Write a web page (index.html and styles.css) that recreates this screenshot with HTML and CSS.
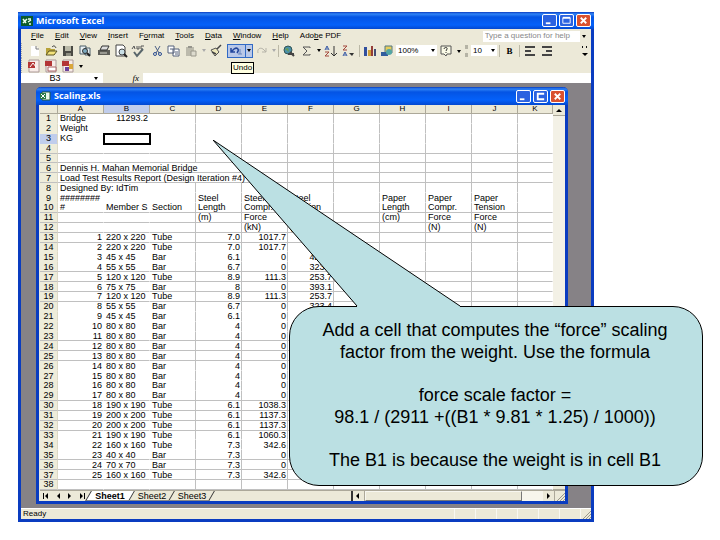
FILE: index.html
```html
<!DOCTYPE html>
<html lang="en">
<head>
<meta charset="utf-8">
<title>Microsoft Excel</title>
<link rel="stylesheet" href="styles.css">
</head>
<body>
<main class="slide">
  <section class="window app">
    <header class="titlebar">
      <svg class="logo" viewBox="0 0 12 10"><path fill="#0b5a2c" d="M0 0h12v10H0z"/><path stroke="#e8fff0" stroke-width="1.5" fill="none" d="M2 3l3 4M6 3L2 7M7 3h3M7 6l3-2M8 8h2"/></svg>
      <h1>Microsoft Excel</h1>
      <div class="controls">
        <button class="ctl" aria-label="Minimize"><svg viewBox="0 0 14 12"><path d="M3 8h5v2H3z" fill="#fff"/></svg></button>
        <button class="ctl" aria-label="Restore"><svg viewBox="0 0 14 12"><path d="M3 3h8v6H3z" fill="none" stroke="#fff"/><path d="M3 3h8" stroke="#fff" stroke-width="2"/></svg></button>
        <button class="ctl close" aria-label="Close"><svg viewBox="0 0 14 12"><path d="M4 3l6 6M10 3L4 9" stroke="#fff" stroke-width="2"/></svg></button>
      </div>
    </header>

    <nav class="menubar">
      <a href="#"><u>F</u>ile</a><a href="#"><u>E</u>dit</a><a href="#"><u>V</u>iew</a><a href="#"><u>I</u>nsert</a><a href="#">F<u>o</u>rmat</a><a href="#"><u>T</u>ools</a><a href="#"><u>D</u>ata</a><a href="#"><u>W</u>indow</a><a href="#"><u>H</u>elp</a><a href="#">Ado<u>b</u>e PDF</a>
      <div class="ask"><input type="text" aria-label="Question" placeholder="Type a question for help"><button class="arrow" aria-label="Recent questions"></button></div>
    </nav>

    <div class="toolbar">
      <div class="group">
        <button class="tool" aria-label="New"><svg viewBox="0 0 16 14"><path d="M5 2h5l3 3v7H5z" fill="#fff"/><path d="M10 2v3h3" fill="none" stroke="#777"/></svg></button>
        <button class="tool" aria-label="Open"><svg viewBox="0 0 16 14"><path d="M3 4h4l1 1h4v6H3z" fill="#b7a238"/><path d="M3 11l3-4h8l-3 4z" fill="#f3e27a" stroke="#5b5424"/><path d="M9 3c2-2 3-1 4 1" fill="none" stroke="#333"/></svg></button>
        <button class="tool" aria-label="Save"><svg viewBox="0 0 16 14"><path d="M3 2h10v10H3z" fill="#4a4a44"/><path d="M5 2h6v5H5z" fill="#b9b9a8"/><path d="M6 9h5v3H6z" fill="#8d8d80"/></svg></button>
        <button class="tool" aria-label="Search"><svg viewBox="0 0 16 14"><path d="M3 2h6v8H3zM8 4h5v7H8z" fill="#e8f0f4" stroke="#4d5e68"/><circle cx="8" cy="7" r="2.500" fill="#7ca9bf" stroke="#333"/><path d="M10 9l3 3" stroke="#222" stroke-width="2"/></svg></button>
      </div>
      <div class="group">
        <button class="tool" aria-label="Print"><svg viewBox="0 0 16 14"><path d="M2 6h12v5H2z" fill="#5d5d57"/><path d="M6 2h7l-2 4H4z" fill="#ddd" stroke="#333"/><path d="M4 9h7" stroke="#d6d6cc"/></svg></button>
        <button class="tool" aria-label="Print preview"><svg viewBox="0 0 16 14"><path d="M3 1h7l2 2v9H3z" fill="#fff" stroke="#444"/><circle cx="9" cy="8" r="3" fill="#c9dfe6" stroke="#444"/><path d="M11 10l3 3" stroke="#222" stroke-width="2"/></svg></button>
        <button class="tool" aria-label="Spelling"><svg viewBox="0 0 16 14"><path d="M2 5l2-3 1 3M7 2v3h2V2M14 2h-3v3h2" fill="none" stroke="#555"/><path d="M4 8l3 4 6-7" fill="none" stroke="#59666b" stroke-width="2"/></svg></button>
      </div>
      <div class="group">
        <button class="tool" aria-label="Cut"><svg viewBox="0 0 16 14"><path d="M6 2l4 7M11 2L7 9" stroke="#4b5f85"/><circle cx="6" cy="10" r="1.500" fill="none" stroke="#2b4d92"/><circle cx="11" cy="10" r="1.500" fill="none" stroke="#2b4d92"/></svg></button>
        <button class="tool" aria-label="Copy"><svg viewBox="0 0 16 14"><path d="M2 2h6v7H2zM7 5h6v7H7z" fill="#fff" stroke="#55607a"/><path d="M4 5h3M9 8h3M9 10h3" stroke="#55607a"/></svg></button>
        <button class="tool" aria-label="Paste"><svg viewBox="0 0 16 14"><path d="M3 3h8v9H3z" fill="#bcbaac"/><path d="M5 2h4v2H5z" fill="#96958c"/><path d="M8 7h5v5H8z" fill="#dddbce" stroke="#99978b"/></svg></button>
        <button class="arrow dim" aria-label="Paste options"></button>
        <button class="tool" aria-label="Format painter"><svg viewBox="0 0 16 14"><path d="M3 6l5-2 3 4-4 4z" fill="#eee9bd" stroke="#555"/><path d="M9 5l4-4M4 8l4 2" stroke="#444" stroke-width="1.5"/></svg></button>
      </div>
      <div class="undo">
        <button class="tool" aria-label="Undo"><svg viewBox="0 0 16 14"><path d="M3 4v4h4M3 8l3-3c3-2 6 0 3 4" fill="none" stroke="#23479d" stroke-width="1.5"/><path d="M12 5v5M10 10h4" stroke="#6684bd"/></svg></button>
        <button class="arrow" aria-label="Undo history"></button>
        <span class="tooltip" role="tooltip">Undo</span>
      </div>
      <div class="group tight">
        <button class="tool" aria-label="Redo"><svg viewBox="0 0 16 14"><path d="M13 4v4H9M13 8l-3-3C7 3 4 5 5 9" fill="none" stroke="#b5b3a8"/></svg></button>
        <button class="arrow dim" aria-label="Redo history"></button>
      </div>
      <div class="group ruled">
        <button class="tool" aria-label="Hyperlink"><svg viewBox="0 0 16 14"><circle cx="7" cy="6" r="4" fill="#4a90a9" stroke="#355"/><path d="M4 5l3-1 1 4" fill="#6a9b52"/><path d="M7 10h6M9 8l4 4" stroke="#444" stroke-width="2"/></svg></button>
        <button class="tool" aria-label="AutoSum"><svg viewBox="0 0 16 14"><path d="M12 4V3H5l4 4-4 4h7v-1" fill="none" stroke="#555"/></svg></button>
        <button class="arrow" aria-label="AutoSum options"></button>
        <button class="tool" aria-label="Sort ascending"><svg viewBox="0 0 16 14"><path d="M2 6l2-4 2 4M3 5h2" fill="none" stroke="#3356a5"/><path d="M2 8h4l-4 4h4" fill="none" stroke="#a3483c"/><path d="M11 2v9M8 9l3 3 3-3" fill="none" stroke="#333"/></svg></button>
        <button class="tool" aria-label="Sort descending"><svg viewBox="0 0 16 14"><path d="M3 2h4L3 6h4" fill="none" stroke="#a3483c"/><path d="M3 12l2-4 2 4M4 11h2" fill="none" stroke="#3356a5"/><path d="M9 9h5l-2 3z" fill="#333"/></svg></button>
      </div>
      <div class="group ruled">
        <button class="tool" aria-label="Chart wizard"><svg viewBox="0 0 16 14"><path d="M2 3h3v9H2z" fill="#314f9d"/><path d="M6 6h3v6H6z" fill="#cf9f39"/><path d="M9 2h2v10H9z" fill="#953d38"/><path d="M12 5h2v7h-2z" fill="#454d74"/></svg></button>
        <button class="tool" aria-label="Drawing"><svg viewBox="0 0 16 14"><path d="M6 2h7v7H6z" fill="#e5cd5d" stroke="#527783"/><path d="M2 8h7v4H2z" fill="#315d9e"/><circle cx="10" cy="8" r="3" fill="#52a6a5"/></svg></button>
        <div class="combo zoom"><input type="text" aria-label="Zoom" value="100%"><button class="arrow" aria-label="Zoom levels"></button></div>
        <button class="tool" aria-label="Help"><svg viewBox="0 0 16 14"><path d="M3 2h10v8H9l-1 2-2-2H3z" fill="#fafae6" stroke="#555"/><path d="M6 5c0-2 4-2 3 0L8 7M8 8v1" fill="none" stroke="#333"/></svg></button>
        <button class="arrow low" aria-label="Toolbar options"></button>
      </div>
      <div class="group grip">
        <div class="combo size"><input type="text" aria-label="Font size" value="10"><button class="arrow" aria-label="Font sizes"></button></div>
      </div>
      <div class="group ruled"><button class="tool bold" aria-label="Bold">B</button></div>
      <div class="group ruled">
        <button class="tool" aria-label="Align left"><svg viewBox="0 0 16 14"><path d="M3 3h10M3 7h6M3 11h10" stroke="#444" stroke-width="2"/></svg></button>
        <button class="tool" aria-label="Align right"><svg viewBox="0 0 16 14"><path d="M3 3h10M7 7h6M3 11h10" stroke="#444" stroke-width="2"/></svg></button>
      </div>
      <button class="more" aria-label="More buttons"><svg viewBox="0 0 8 12"><path d="M1 1l1 1-1 1M5 1l1 1-1 1" fill="none" stroke="#111"/><path d="M1 8h6L4 11z"/></svg></button>
    </div>

    <div class="toolbar pdf">
      <div class="group">
        <button class="tool" aria-label="Convert to PDF"><svg viewBox="0 0 16 14"><path d="M3 1h10v12H3z" fill="#f8ece8" stroke="#a99"/><path d="M2 3h7v6H2z" fill="#b33535"/><path d="M4 8l3-4 3 4" fill="none" stroke="#fff"/></svg></button>
        <button class="tool" aria-label="Convert and email"><svg viewBox="0 0 16 14"><path d="M3 1h10v12H3z" fill="#f8ece8" stroke="#a99"/><path d="M2 2h7v5H2z" fill="#b33535"/><path d="M5 8h8v4H5z" fill="#fff" stroke="#a66"/></svg></button>
        <button class="tool" aria-label="Convert and review"><svg viewBox="0 0 16 14"><path d="M3 1h10v12H3z" fill="#f8ece8" stroke="#a99"/><path d="M2 2h7v5H2z" fill="#b33535"/><path d="M5 8h4v4H5z" fill="#6b419a"/><path d="M9 5h4v5H9z" fill="#d9a63b"/></svg></button>
        <button class="arrow low" aria-label="PDF options"></button>
      </div>
    </div>

    <div class="formula">
      <input class="name" type="text" aria-label="Name box" value="B3">
      <button class="arrow names" aria-label="Names"></button>
      <label class="fx" for="fx"><i>fx</i></label>
      <input class="value" id="fx" type="text">
    </div>

    <div class="workspace">
      <section class="window book">
        <header class="titlebar">
          <svg class="logo" viewBox="0 0 12 10"><path fill="#e9f6e9" stroke="#245b39" d="M3 1h8v8H3z"/><path fill="#2a7a47" d="M1 2h6v6H1z"/><path stroke="#fff" d="M2 3l4 4M6 3L2 7"/></svg>
          <h2>Scaling.xls</h2>
          <div class="controls">
            <button class="ctl" aria-label="Minimize workbook"><svg viewBox="0 0 14 12"><path d="M3 8h5v2H3z" fill="#fff"/></svg></button>
            <button class="ctl" aria-label="Maximize workbook"><svg viewBox="0 0 14 12"><path d="M11 3H4v6h7" fill="none" stroke="#fff" stroke-width="2"/></svg></button>
            <button class="ctl close" aria-label="Close workbook"><svg viewBox="0 0 14 12"><path d="M4 3l6 6M10 3L4 9" stroke="#fff" stroke-width="2"/></svg></button>
          </div>
        </header>
        <div class="sheet">
          <table>
            <colgroup><col class="c-num"><col class="c" span="10"><col></colgroup>
            <thead><tr><th></th><th>A</th><th class="on">B</th><th>C</th><th>D</th><th>E</th><th>F</th><th>G</th><th>H</th><th>I</th><th>J</th><th>K</th></tr></thead>
            <tbody id="rows"></tbody>
          </table>
          <div class="vscroll"><button class="up" aria-label="Scroll up"></button><button class="down" aria-label="Scroll down"></button></div>
        </div>
        <footer class="tabs">
          <div class="nav">
            <button aria-label="First sheet"><svg viewBox="0 0 8 8"><path d="M6 1v6L3 4zM1 1h1v6H1z"/></svg></button><button aria-label="Previous sheet"><svg viewBox="0 0 8 8"><path d="M6 1v6L3 4z"/></svg></button><button aria-label="Next sheet"><svg viewBox="0 0 8 8"><path d="M2 1v6l3-3z"/></svg></button><button aria-label="Last sheet"><svg viewBox="0 0 8 8"><path d="M2 1v6l3-3zM6 1h1v6H6z"/></svg></button>
          </div>
          <a class="tab current" href="#">Sheet1</a><a class="tab" href="#">Sheet2</a><a class="tab" href="#">Sheet3</a>
          <div class="hscroll">
            <button aria-label="Scroll left"><svg viewBox="0 0 8 8"><path d="M5 1v6L2 4z"/></svg></button><span class="thumb"></span><span class="track"></span><button aria-label="Scroll right"><svg viewBox="0 0 8 8"><path d="M3 1v6l3-3z"/></svg></button>
          </div>
          <svg class="corner" viewBox="0 0 10 10"><path d="M2 10l8-8M5 10l5-5M8 10l2-2" stroke="#9a978a"/></svg>
        </footer>
      </section>
    </div>
    <footer class="status"><span class="ready">Ready</span><span></span><span></span><span></span><span></span><span></span><span></span><svg class="corner" viewBox="0 0 10 10"><path d="M2 10l8-8M5 10l5-5M8 10l2-2" stroke="#9a978a"/></svg></footer>
  </section>

  <aside class="callout">
    <svg class="tail" viewBox="0 0 248 167"><path d="M144 167V166L0 0 247 166v1z" fill="#bbe0e3"/><path d="M144 166L0 0l247 166" fill="none" stroke="#000"/></svg>
    <p>Add a cell that computes the “force” scaling<br>factor from the weight. Use the formula</p>
    <p>force scale factor =<br>98.1 / (2911 +((B1 * 9.81 * 1.25) / 1000))</p>
    <p>The B1 is because the weight is in cell B1</p>
  </aside>
</main>
<script src="sheet.js"></script>
</body>
</html>
```
FILE: styles.css
```css
* { box-sizing: border-box; }
body { margin: 0; background: #fff; color: #000; font: 8px/10px "Liberation Sans", Arial, sans-serif; }
button, input { margin: 0; padding: 0; border: 0; background: none; font: inherit; color: inherit; min-width: 0; }
a { color: inherit; text-decoration: none; }
svg { display: block; }
.slide { position: relative; display: flex; height: 100vh; padding: 12px 0 18px 18px; overflow: hidden; }

.window { display: flex; flex-direction: column; border: 3px solid #0a3cc0; border-top: 0; }
.app { width: 82%; background: #ece9d8; }
.titlebar { display: flex; align-items: center; gap: 3px; flex: none; height: 17px; margin: 0 -3px; padding: 0 3px; background: linear-gradient(#0a3cc0, #2f83f6 2px, #0454e4 5px, #0461fa 13px, #0348cf); color: #fff; }
.titlebar h1, .titlebar h2 { flex: 1; margin: 0; font: bold 9px/12px "Open Sans", sans-serif; }
.logo { width: 12px; height: 10px; }
.controls { display: flex; gap: 2px; }
.ctl { width: 15px; height: 13px; border: 1px solid #fff; border-radius: 2px; background: #2b62e0; }
.ctl svg { width: 13px; height: 11px; }
.close { background: #d9512f; }

.menubar { display: flex; align-items: center; gap: 11px; height: 14px; flex: none; padding: 0 2px 0 10px; }
.ask { display: flex; width: 106px; height: 11px; margin-left: auto; background: #fff; color: #777; }
.ask input { flex: 1; padding-left: 2px; }
.ask input::placeholder { color: #888; opacity: 1; }
.ask .arrow { width: 9px; background-color: #ece9d8; }

.toolbar { display: flex; align-items: center; flex: none; height: 15px; padding-left: 4px; border-left: 1px dotted #aaa; }
.group { display: flex; align-items: center; height: 12px; margin-right: 2px; }
.tight { margin-right: 0; }
.ruled { padding-left: 2px; border-left: 1px solid #bbb8a6; }
.grip { padding-left: 3px; border-left: 3px dotted #b5b3a5; }
.tool { flex: none; width: 17px; height: 14px; }
.tool svg { width: 16px; height: 14px; }
.bold { width: 15px; font: bold 9px/14px "Liberation Serif", serif; }
.arrow { position: relative; flex: none; width: 8px; height: 11px; }
.arrow::after { content: ""; display: block; width: 0; margin: 0 auto; border: 2px solid transparent; border-top: 3px solid #000; border-bottom: 0; }
.dim::after { border-top-color: #aaa; }
.low { align-self: flex-end; }
.undo { position: relative; display: flex; align-items: center; height: 14px; border: 1px solid #316ac5; background: #b9c8e8; }
.undo .arrow { width: 7px; height: 12px; border-left: 1px solid #316ac5; }
.tooltip { position: absolute; left: 3px; top: 17px; padding: 0 1px; border: 1px solid #000; background: #ffffe1; font-size: 8px; line-height: 10px; }
.combo { display: flex; height: 11px; background: #fff; }
.combo input { flex: 1; padding-left: 2px; }
.zoom { width: 41px; margin-right: 1px; }
.size { width: 26px; }
.more { width: 9px; height: 13px; margin: 0 1px 0 auto; }
.more svg { width: 8px; height: 12px; }

.formula { display: flex; align-items: center; flex: none; height: 10px; }
.formula input { height: 10px; background: #fff; }
.name { width: 68px; text-align: center; font-size: 9px; }
.formula .names { width: 14px; height: 10px; background: #fff; }
.fx { flex: none; width: 40px; padding-right: 4px; text-align: right; font-family: "Liberation Serif", serif; font-size: 9px; }
.value { flex: 1; }

.workspace { display: flex; flex: 1; min-height: 0; padding: 4px 23px 4px 15px; background: #868286; }
.book { flex: 1; min-width: 0; border-radius: 5px 5px 0 0; background: #ece9d8; }
.book .titlebar { height: 18px; border-radius: 5px 5px 0 0; }
.sheet { display: flex; flex: 1; min-height: 0; margin-left: 1px; }
table { flex: 1; width: 0; height: 100%; table-layout: fixed; border-spacing: 0; background: #fff; font-size: 9px; line-height: 8px; }
.c-num { width: 18px; }
.c { width: 46px; }
th, td { height: 9px; padding: 0; font-weight: normal; white-space: nowrap; vertical-align: middle; }
thead th { background: #ece9d8; border-right: 1px solid #aca899; border-bottom: 1px solid #aca899; font-size: 8px; }
tbody th { background: #eeecda; border-right: 1px solid #dcd9c6; border-bottom: 1px solid transparent; }
td { padding: 0 1px 0 2px; border-bottom: 1px solid transparent; border-right: 1px solid transparent; text-align: left; }
td.line { border-right-color: #c0c0c0; }
tr.rule > * { border-bottom-color: #c0c0c0; }
.right { text-align: right; }
th.on { background: #c0cdec; }
td.cursor { outline: 2px solid #000; outline-offset: -1px; }

.vscroll { display: flex; flex-direction: column; justify-content: space-between; width: 12px; background: #f3f1e6; }
.vscroll button { height: 11px; background: #ece9d8; border-bottom: 1px solid #aca899; }
.vscroll button::after { content: ""; display: block; width: 0; margin: 0 auto; border: 3px solid transparent; border-top-width: 0; border-bottom-color: #000; }
.vscroll .down::after { border-width: 3px 3px 0; border-top-color: #000; }

.tabs { display: flex; align-items: stretch; flex: none; height: 11px; border-top: 1px solid #aca899; margin-left: 1px; }
.tabs svg { width: 8px; height: 8px; margin: 0 auto; }
.nav { display: flex; width: 48px; }
.nav button { flex: 1; }
.tab { position: relative; z-index: 0; width: 40px; font-size: 9px; text-align: center; }
.tab::before { content: ""; position: absolute; z-index: -1; inset: 0; border-right: 1px solid #333; border-bottom: 1px solid #888; transform: skewX(-30deg); }
.current { width: 44px; font-weight: bold; }
.current::before { background: #fff; border-left: 1px solid #333; }
.hscroll { display: flex; width: 204px; margin-left: auto; border-left: 2px solid #333; background: #f7f5ec; }
.hscroll button { width: 12px; border-right: 1px solid #aca899; background: #ece9d8; }
.thumb { flex: 1; border: 1px solid #f8f7f0; border-right-color: #777; border-bottom-color: #777; background: #ece9d8; }
.track { width: 21px; }
.corner { flex: none; width: 10px; height: 10px; }
.tabs .corner { width: 10px; height: 10px; margin: 0; }

.status { display: flex; flex: none; height: 11px; padding-left: 2px; border-top: 1px solid #fff; }
.status span { width: 21px; border-right: 1px solid #f9f8f2; }
.status .ready { flex: 1; }

.callout { position: absolute; left: 289px; top: 306px; display: grid; gap: 21px; width: 414px; padding: 12px 12px 14px 10px; border: 1px solid #000; border-radius: 30px; background: #bbe0e3; font-size: 18px; line-height: 22px; text-align: center; }
.callout p { margin: 0; white-space: nowrap; }
.tail { position: absolute; left: -77px; top: -167px; width: 248px; height: 167px; }
```
FILE: sheet.js
```js
// Cells are listed per row from column A; "" is an empty cell.
const size = n => n + " x " + n;
const bar = (n, s, d, e, f) => [n, size(s), "Bar", d, e, f];
const tube = (n, s, d, e, f) => [n, size(s), "Tube", d, e, f];

const rows = [
  ["Bridge", 11293.2], ["Weight"], ["KG"], [], [],
  ["Dennis H. Mahan  Memorial Bridge"],
  ["Load Test Results Report (Design Iteration #4)"],
  ["Designed By: IdTim"],
  ["########", "", "", "Steel", "Steel", "Steel", "", "Paper", "Paper", "Paper"],
  ["#", "Member S", "Section", "Length", "Compr.", "Tension", "", "Length", "Compr.", "Tension"],
  ["", "", "", "(m)", "Force", "Force", "", "(cm)", "Force", "Force"],
  ["", "", "", "", "(kN)", "(kN)", "", "", "(N)", "(N)"],
  tube(1, 220, "7.0", 1017.7, ""), tube(2, 220, "7.0", 1017.7, ""),
  bar(3, 45, 6.1, 0, 429.7), bar(4, 55, 6.7, 0, 323.4),
  tube(5, 120, 8.9, 111.3, 253.7), bar(6, 75, 8, 0, 393.1),
  tube(7, 120, 8.9, 111.3, 253.7), bar(8, 55, 6.7, 0, 323.4),
  bar(9, 45, 6.1, 0, ""),
  ...[10, 11, 12, 13, 14, 15, 16, 17].map(n => bar(n, 80, 4, 0, "")),
  tube(18, 190, 6.1, 1038.3, ""), tube(19, 200, 6.1, 1137.3, ""),
  tube(20, 200, 6.1, 1137.3, ""), tube(21, 190, 6.1, 1060.3, ""),
  tube(22, 160, 7.3, 342.6, ""), bar(23, 40, 7.3, 0, ""),
  bar(24, 70, 7.3, 0, ""), tube(25, 160, 7.3, 342.6, ""), []
];
const ruled = new Set([4, 5, 6, 7, 10, 11, 12, 13, 16, 17, 18, 19, 23, 24, 25, 29, 30, 31, 32, 35, 36, 37, 38]);
const spans = { 6: 4, 7: 5, 8: 3 };

const body = document.getElementById("rows");
rows.forEach((cells, i) => {
  const number = i + 1;
  const tr = body.insertRow();
  if (ruled.has(number)) tr.className = "rule";
  const head = document.createElement("th");
  head.textContent = number;
  if (number === 3) head.className = "on";
  tr.append(head);
  for (let col = 0; col < 11;) {
    const td = tr.insertCell();
    const value = cells[col] ?? "";
    const span = col === 0 ? spans[number] || 1 : 1;
    td.textContent = value;
    td.colSpan = span;
    if (typeof value === "number" || value === "7.0") td.classList.add("right");
    if (col + span > 2 && col < 10) td.classList.add("line");
    if (number === 3 && col === 1) td.classList.add("cursor");
    col += span;
  }
});
```
